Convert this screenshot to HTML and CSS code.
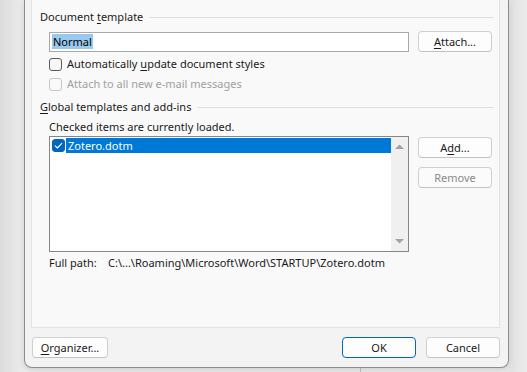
FILE: index.html
```html
<!DOCTYPE html>
<html>
<head>
<meta charset="utf-8">
<link rel="stylesheet" href="styles.css">
</head>
<body>
<div class="desktop">
  <div class="dialog">
    <div class="panel">
      <div class="group-head"><span>Document <u>t</u>emplate</span><span class="rule"></span></div>
      <div class="indent row tpl-row">
        <div class="textbox"><span class="sel">Normal</span></div>
        <button class="btn"><u>A</u>ttach...</button>
      </div>
      <label class="indent check-row first">
        <span class="cb"></span><span>Automatically <u>u</u>pdate document styles</span>
      </label>
      <label class="indent check-row disabled">
        <span class="cb"></span><span>Attach to all new e-mail messages</span>
      </label>

      <div class="group-head second"><span><u>G</u>lobal templates and add-ins</span><span class="rule"></span></div>
      <div class="indent note">Checked items are currently loaded.</div>
      <div class="indent row list-row">
        <div class="listbox">
          <div class="items">
            <div class="item">
              <span class="cb on"><svg viewBox="0 0 13 13" width="13" height="13"><path d="M3.2 6.8 L5.4 9 L9.8 4.4" fill="none" stroke="#fff" stroke-width="1.1" stroke-linecap="round" stroke-linejoin="round"/></svg></span>
              <span class="item-text">Zotero.dotm</span>
            </div>
          </div>
          <div class="scrollbar">
            <svg viewBox="0 0 17 10" width="17" height="10"><path d="M4 8 L8.5 3.5 L13 8 Z" fill="#a3a3a3"/></svg>
            <svg viewBox="0 0 17 10" width="17" height="10"><path d="M4 2 L8.5 6.5 L13 2 Z" fill="#a3a3a3"/></svg>
          </div>
        </div>
        <div class="side-btns">
          <button class="btn">A<u>d</u>d...</button>
          <button class="btn" disabled>Remove</button>
        </div>
      </div>
      <div class="indent path"><span class="path-label">Full path:</span><span>C:\...\Roaming\Microsoft\Word\STARTUP\Zotero.dotm</span></div>
    </div>
    <div class="footer">
      <button class="btn wide"><u>O</u>rganizer...</button>
      <div class="footer-right">
        <button class="btn default">OK</button>
        <button class="btn">Cancel</button>
      </div>
    </div>
  </div>
  <div class="under"><span class="under-line"></span></div>
</div>
</body>
</html>
```

FILE: styles.css
```css
* { box-sizing: border-box; }
html, body { margin: 0; padding: 0; }
body {
  width: 527px;
  height: 372px;
  overflow: hidden;
  font-family: "Noto Sans", "Open Sans", sans-serif;
  font-size: 11px;
  color: #1a1a1a;
  background: linear-gradient(90deg, #dcdcdc 0px, #ebebeb 22px, #ebebeb 505px, #e2e2e2 512px, #ececec 527px);
}
u { text-decoration: underline; text-underline-offset: 2px; text-decoration-thickness: 1px; }

.desktop { padding-left: 24px; }

.dialog {
  width: 485px;
  height: 368px;
  background: #f3f3f3;
  border: 1px solid #8c8c8c;
  border-top: none;
  border-radius: 0 0 8px 8px;
  padding: 0 8px 0 6px;
  display: flex;
  flex-direction: column;
  box-shadow: 0 2px 6px rgba(0,0,0,0.12);
}

.panel {
  height: 328px;
  background: #f9f9f9;
  border: 1px solid #e3e3e3;
  border-top: none;
  padding: 9px 5px 0 8px;
}

.group-head {
  display: flex;
  align-items: center;
  height: 16px;
  line-height: 16px;
  white-space: nowrap;
}
.group-head .rule {
  flex: 1;
  height: 1px;
  background: #e0e0e0;
  margin-left: 6px;
  margin-top: 1px;
}
.group-head.second { margin-top: 7px; }

.indent { margin-left: 9px; }

.row { display: flex; }
.tpl-row { margin-top: 6px; align-items: center; gap: 9px; }

.textbox {
  width: 360px;
  height: 20px;
  background: #fff;
  border: 1px solid #a9a9a9;
  padding: 0 2px;
  line-height: 18px;
  display: flex;
  align-items: center;
}
.sel { background: #99c9ef; color: #000; line-height: 15px; padding: 0 1px; }

.btn {
  font-family: inherit;
  font-size: 11px;
  color: #1a1a1a;
  width: 74px;
  height: 21px;
  padding: 0;
  background: #fdfdfd;
  border: 1px solid #d0d0d0;
  border-bottom-color: #c2c2c2;
  border-radius: 4px;
  line-height: 18px;
}
.btn:disabled { color: #8a8a8a; background: #fbfbfb; }
.btn.default { border: 1.5px solid #0067c0; }
.btn.wide { width: 76px; }

.check-row {
  display: flex;
  align-items: center;
  height: 16px;
  line-height: 16px;
  gap: 5px;
}
.check-row.first { margin-top: 4px; }
.check-row + .check-row { margin-top: 4px; }
.cb {
  width: 13px;
  height: 13px;
  border: 1px solid #5b5b5b;
  border-radius: 3px;
  background: #f6f6f6;
  flex: none;
}
.check-row.disabled { color: #a0a0a0; }
.check-row.disabled .cb { border-color: #c6c6c6; background: #f9f9f9; }

.note { margin-top: 4px; height: 16px; line-height: 16px; }

.list-row { margin-top: 1px; gap: 9px; align-items: flex-start; }
.listbox {
  width: 360px;
  height: 116px;
  background: #fff;
  border: 1px solid #828790;
  display: flex;
}
.items { flex: 1; padding: 1px 0 0 2px; }
.item { display: flex; align-items: center; height: 15px; }
.cb.on {
  background: #0067c0;
  border-color: #0067c0;
  display: flex;
}
.cb.on svg { display: block; margin: -1px; }
.item-text {
  flex: 1;
  margin-left: 1px;
  height: 15px;
  line-height: 15px;
  background: #0078d7;
  color: #fff;
  padding-left: 2px;
}
.scrollbar {
  width: 17px;
  background: #f0f0f0;
  display: flex;
  flex-direction: column;
  justify-content: space-between;
  padding: 4px 0 4px;
}
.scrollbar svg { display: block; }

.side-btns { display: flex; flex-direction: column; gap: 9px; padding-top: 1px; }

.path { margin-top: 3px; height: 16px; line-height: 16px; display: flex; }
.path-label { width: 59px; }

.footer {
  display: flex;
  justify-content: space-between;
  padding: 9px 0 0 1px;
  margin-right: 0px;
}
.footer-right { display: flex; gap: 10px; margin-right: 0; }

.under { height: 4px; position: relative; }
.under-line { position: absolute; left: 336px; top: 0; width: 1px; height: 4px; background: #b5b5b5; }
```
